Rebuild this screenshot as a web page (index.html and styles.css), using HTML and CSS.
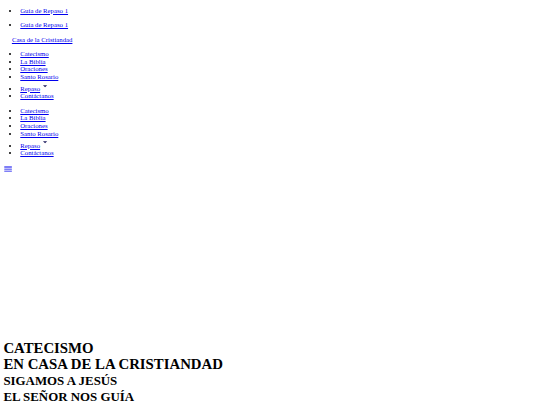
FILE: index.html
```html
<!DOCTYPE html>
<html lang="es">
<head>
<meta charset="utf-8">
<title>Casa de la Cristiandad</title>
<link rel="stylesheet" href="styles.css">
</head>
<body>
<header class="site-header">
  <ul class="menu">
    <li><a href="#">Guía de Repaso 1</a></li>
  </ul>
  <ul class="menu">
    <li><a href="#">Guía de Repaso 1</a></li>
  </ul>
  <nav class="navbar">
    <div class="brand-wrap"><a class="brand" href="#">Casa de la Cristiandad</a></div>
    <ul class="menu">
      <li><a href="#">Catecismo</a></li>
      <li><a href="#">La Biblia</a></li>
      <li><a href="#">Oraciones</a></li>
      <li><a href="#">Santo Rosario</a></li>
      <li><a href="#">Repaso<svg class="icon caret" viewBox="0 0 24 24"><path d="M7 10l5 5 5-5z"/></svg></a></li>
      <li><a href="#">Contáctanos</a></li>
    </ul>
    <ul class="menu">
      <li><a href="#">Catecismo</a></li>
      <li><a href="#">La Biblia</a></li>
      <li><a href="#">Oraciones</a></li>
      <li><a href="#">Santo Rosario</a></li>
      <li><a href="#">Repaso<svg class="icon caret" viewBox="0 0 24 24"><path d="M7 10l5 5 5-5z"/></svg></a></li>
      <li><a href="#">Contáctanos</a></li>
    </ul>
    <div class="trigger-wrap"><a class="trigger" href="#"><svg class="icon" viewBox="0 0 24 24"><path d="M3 18h18v-2H3v2zm0-5h18v-2H3v2zm0-7v2h18V6H3z"/></svg></a></div>
  </nav>
</header>
<section class="hero">
  <h1 class="hero-title">CATECISMO<br>EN CASA DE LA CRISTIANDAD</h1>
  <h2 class="hero-sub">SIGAMOS A JESÚS<br>EL SEÑOR NOS GUÍA</h2>
</section>
</body>
</html>
```
FILE: styles.css
```css
html {
  background: #fff;
}
body {
  margin: 0 3.375px;
  font-family: "Liberation Serif", "Times New Roman", serif;
  font-size: 6.75px;
  line-height: 7.65px;
  color: #000;
}
a {
  color: #0000ee;
}
.menu {
  margin: 6.75px 0;
  padding-left: 16.875px;
}
.brand-wrap {
  margin: 6.75px 0;
  padding-left: 8.5px;
}
.icon {
  width: 10.125px;
  height: 10.125px;
  fill: currentColor;
}
.caret {
  fill: #1c1c5e;
}
.trigger-wrap {
  margin: 6px 0 0;
}
.hero {
  padding-top: 165px;
}
.hero-title {
  margin: 0;
  font-size: 14.8px;
  line-height: 16px;
  font-weight: bold;
}
.hero-sub {
  margin: 1px 0 0;
  font-size: 12.9px;
  line-height: 16px;
  font-weight: bold;
}
```
